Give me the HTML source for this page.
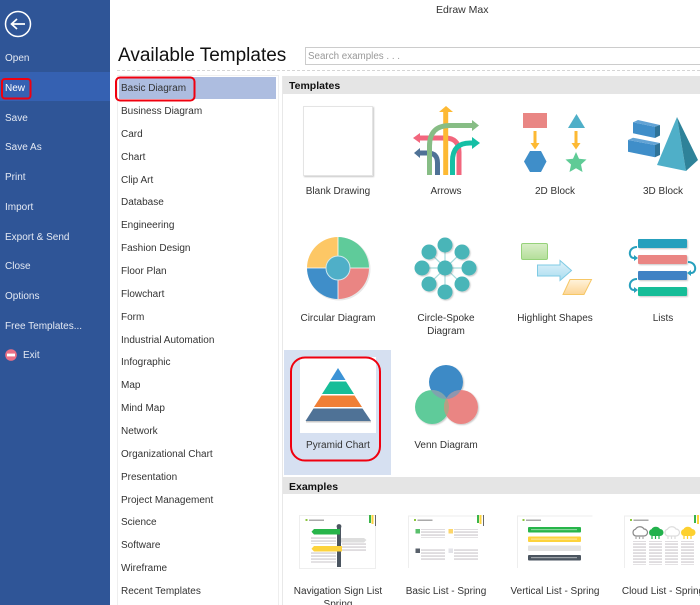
<!DOCTYPE html>
<html><head><meta charset="utf-8"><style>
html,body{margin:0;padding:0;background:#fff}
#p{position:relative;width:700px;height:605px;overflow:hidden;background:#fff;font-family:"Liberation Sans",sans-serif;font-size:10px;color:#333;filter:blur(.3px)}
#p>*{position:absolute}
.t{white-space:nowrap;line-height:12px;transform:translateY(-5px)}
.s{color:#e4e9f3;left:5px}
.l{left:121px;color:#333}
.c{text-align:center;width:110px;color:#333}
svg{left:0;top:0}
</style></head><body><div id="p">
<div style="left:0;top:0;width:110px;height:605px;background:#2f5597"></div>
<div style="left:0;top:72px;width:110px;height:29px;background:#3561b2"></div>
<div style="left:117px;top:75px;width:160px;height:530px;background:#fff;border-left:1px solid #eee;border-right:1px solid #eee;border-top:1px solid #eee"></div>
<div style="left:119px;top:77px;width:157px;height:22px;background:#adbde0"></div>
<div style="left:284px;top:350px;width:107px;height:125px;background:#d6e0f1"></div>
<div style="left:283px;top:76px;width:417px;height:18px;background:#e5e5e5"></div>
<div style="left:283px;top:477px;width:417px;height:17px;background:#e5e5e5"></div>
<div style="left:282px;top:76px;width:1px;height:529px;background:#e8e8e8"></div>
<div style="left:117px;top:70px;width:583px;border-top:1px dashed #d5d5d5"></div>
<div style="left:305px;top:47px;width:395px;height:18px;border:1px solid #ccc;box-sizing:border-box;border-right:0"></div>

<svg width="700" height="605" viewBox="0 0 700 605">
<defs>
<filter id="sh" x="-20%" y="-20%" width="140%" height="140%"><feDropShadow dx="1" dy="1" stdDeviation="0.8" flood-color="#000" flood-opacity=".22"/></filter>
<pattern id="tl" width="10" height="3" patternUnits="userSpaceOnUse"><rect width="10" height="1.1" y=".5" fill="#c9c4c9"/></pattern>
<linearGradient id="gg" x1="0" y1="0" x2="0" y2="1"><stop offset="0" stop-color="#d9eec8"/><stop offset="1" stop-color="#b4de9a"/></linearGradient>
<linearGradient id="gb" x1="0" y1="0" x2="0" y2="1"><stop offset="0" stop-color="#e0f2fa"/><stop offset="1" stop-color="#a9dcef"/></linearGradient>
<linearGradient id="go" x1="0" y1="0" x2="0" y2="1"><stop offset="0" stop-color="#fff3dc"/><stop offset="1" stop-color="#fcd596"/></linearGradient>
<clipPath id="cb"><circle cx="446" cy="382" r="17"/></clipPath>
<clipPath id="cg"><circle cx="432" cy="407" r="17"/></clipPath>
<clipPath id="cp"><circle cx="461" cy="407" r="17"/></clipPath>
<path id="cl" d="M3 11a3.500 3.500 0 0 1-.5-6.800A5 5 0 0 1 11 4a3.500 3.500 0 0 1 0 7Z"/>
</defs>
<!-- back -->
<circle cx="18" cy="24" r="12.500" fill="none" stroke="#fff" stroke-width="1.500"/>
<path d="M25 24H12M17 19l-5.500 5 5.500 5" fill="none" stroke="#fff" stroke-width="1.700"/>
<!-- exit -->
<circle cx="11" cy="355" r="5.800" fill="#ea6f86"/><rect x="7" y="353.600" width="8" height="2.800" fill="#fff"/>
<!-- blank -->
<rect x="303.500" y="106.500" width="69" height="69" fill="#fff" stroke="#e4e4e4" filter="url(#sh)"/>
<!-- arrows -->
<g fill="none" stroke-width="5">
<path d="M459 175V152Q459 138 445 138H419" stroke="#f2667d"/>
<path d="M437.500 175V163Q437.500 153 428 153H419" stroke="#4f7296"/>
<path d="M445.700 175V110" stroke="#fdb933"/>
<path d="M429.500 175V146Q429.500 125.500 450 125.500H473" stroke="#87bd85"/>
<path d="M452.500 175V161Q452.500 143 470 143H473" stroke="#15bfa5"/>
</g>
<path d="M446 106L453 112H439Z" fill="#fdb933"/><path d="M479 125.500L472 120V131Z" fill="#87bd85"/>
<path d="M413 138L420 133V143Z" fill="#f2667d"/><path d="M414 153L420 148V158Z" fill="#4f7296"/><path d="M480 143L472 137V149Z" fill="#15bfa5"/>
<!-- 2d -->
<rect x="523" y="113" width="24" height="15" fill="#e98684"/>
<path d="M576.500 114L585 128H568Z" fill="#4fafc8"/>
<path d="M533.500 131h3v12h3L535 149.500 530.500 143h3ZM574.500 131h3v12h3L576 149.500 571.500 143h3Z" fill="#fdb933"/>
<path d="M530 151h11l5.500 10.500L541 172h-11l-6-10.500Z" fill="#3f8ec9"/>
<path d="M576 152l3 6.700 7.500.8-5.500 5 1.500 7.500-6.500-3.800-6.500 3.800 1.500-7.500-5.500-5 7.500-.8Z" fill="#5fcb96"/>
<!-- 3d -->
<path d="M633 122.300L655 126.700V138L633 133.300Z" fill="#3f8ec9"/><path d="M633 122.300L638 120 660 125 655 126.700Z" fill="#62a3d5"/><path d="M655 126.700L660 125V135.500L655 138Z" fill="#2f7398"/>
<path d="M628 140L655 145V157.300L628 151.700Z" fill="#3f8ec9"/><path d="M628 140L633 137.700 660 143 655 145Z" fill="#62a3d5"/><path d="M655 145L660 143V155L655 157.300Z" fill="#2f7398"/>
<path d="M677 117L657 165 686 171Z" fill="#4fafc8"/><path d="M677 117L686 171 698 160Z" fill="#2e8299"/>
<!-- circular -->
<circle cx="339" cy="269" r="31.500" fill="#e8e8e8"/>
<path d="M338 268V237A31 31 0 0 0 307 268Z" fill="#fdc765"/>
<path d="M338 268V237A31 31 0 0 1 369 268Z" fill="#5fcb9a"/>
<path d="M338 268H369A31 31 0 0 1 338 299Z" fill="#ea8583"/>
<path d="M338 268H307A31 31 0 0 0 338 299Z" fill="#3f8ec9"/>
<path d="M338 237V299M307 268H369" stroke="#fff" stroke-width=".8"/>
<circle cx="338" cy="268" r="12" fill="#4fafc8" stroke="#cfe8ee" stroke-width="1"/>
<!-- spoke -->
<g stroke="#a5dadb" stroke-width="1.200"><path d="M445 245V292M422 268H469M429 252L462 284M462 252L429 284"/></g>
<g fill="#4ab5b8" filter="url(#sh)"><circle cx="445" cy="268" r="7.500"/><circle cx="445" cy="245" r="7.500"/><circle cx="445" cy="292" r="7.500"/><circle cx="422" cy="268" r="7.500"/><circle cx="469" cy="268" r="7.500"/><circle cx="429" cy="252" r="7.500"/><circle cx="462" cy="252" r="7.500"/><circle cx="429" cy="284" r="7.500"/><circle cx="462" cy="284" r="7.500"/></g>
<!-- highlight -->
<rect x="521.500" y="243.500" width="26" height="16" rx="1.500" fill="url(#gg)" stroke="#96d27a"/>
<path d="M537.500 265H560V260.500L571.500 270.500L560 280.500V276H537.500Z" fill="url(#gb)" stroke="#7fcbe4"/>
<path d="M570 279.500H591.500L584 294.500H563Z" fill="url(#go)" stroke="#f6c766"/>
<!-- lists -->
<g filter="url(#sh)"><rect x="638" y="239" width="49" height="9" rx="1" fill="#27a0bd"/><rect x="638" y="255" width="49" height="9" rx="1" fill="#ea8583"/><rect x="638" y="271" width="49" height="9" rx="1" fill="#3f82c4"/><rect x="638" y="287" width="49" height="9" rx="1" fill="#17bd98"/></g>
<g fill="none" stroke="#27a0bd" stroke-width="2"><path d="M637 247C628 247 628 258 634 258"/><path d="M688 262C697 262 697 273 691 273"/><path d="M637 279C628 279 628 290 634 290"/></g>
<g fill="#27a0bd"><path d="M638 258l-4-3v6ZM687 273l4-3v6ZM638 290l-4-3v6Z"/></g>
<!-- pyramid -->
<rect x="300" y="357" width="76" height="76" fill="#fff"/>
<path d="M338 368L345.500 380H330.500Z" fill="#3c93d6"/>
<path d="M330 381.500H346L354 394H322Z" fill="#17bd98"/>
<path d="M321.500 395.500H354.500L362 407H314Z" fill="#f07f36"/>
<path d="M313.500 408.500H362.500L371 421H305.500Z" fill="#4f7296"/>
<rect x="306" y="421" width="65" height="1.500" fill="#c9c9c9"/>
<rect x="291" y="357.500" width="89" height="103" rx="14" fill="none" stroke="#f0000f" stroke-width="2"/>
<!-- venn -->
<g filter="url(#sh)"><circle cx="446" cy="382" r="17" fill="#3c8ac6"/><circle cx="432" cy="407" r="17" fill="#5fcb9a"/><circle cx="461" cy="407" r="17" fill="#ea8583"/></g>
<g clip-path="url(#cb)"><circle cx="432" cy="407" r="17" fill="#7fa3ae"/><circle cx="461" cy="407" r="17" fill="#8f96ae"/></g>
<g clip-path="url(#cg)"><circle cx="461" cy="407" r="17" fill="#b3a184"/></g>
<!-- red boxes -->
<rect x="2" y="79" width="28.500" height="19.500" rx="3" fill="none" stroke="#f0000f" stroke-width="2"/>
<rect x="116" y="77.500" width="78.500" height="23" rx="4" fill="none" stroke="#f0000f" stroke-width="2"/>
<!-- thumbs -->
<g fill="none" stroke="#eee"><rect x="299.500" y="515.500" width="76" height="53" fill="#fff"/><path d="M408.500 568V516h75M517.500 568V516h75M624.500 568V516h75"/></g>
<g><rect x="305.500" y="519" width="2" height="2" fill="#8cc63f"/><rect x="309" y="519.500" width="15" height="1.500" fill="#aaa"/><rect x="414" y="519" width="2" height="2" fill="#8cc63f"/><rect x="417.500" y="519.500" width="15" height="1.500" fill="#aaa"/><rect x="522.500" y="519" width="2" height="2" fill="#8cc63f"/><rect x="526" y="519.500" width="15" height="1.500" fill="#aaa"/><rect x="630" y="519" width="2" height="2" fill="#8cc63f"/><rect x="633.500" y="519.500" width="15" height="1.500" fill="#aaa"/>
<rect x="369" y="515" width="2" height="8" fill="#3ab54a"/><rect x="371.500" y="515" width="2" height="9" fill="#fdd33d"/><rect x="375" y="515" width="1" height="11" fill="#666"/>
<rect x="477" y="515" width="2" height="8" fill="#3ab54a"/><rect x="479.500" y="515" width="2" height="9" fill="#fdd33d"/><rect x="483" y="515" width="1" height="11" fill="#666"/>
<rect x="694" y="515" width="2" height="8" fill="#3ab54a"/><rect x="697" y="515" width="2" height="9" fill="#fdd33d"/></g>
<!-- nav sign -->
<rect x="337" y="526" width="4" height="41" fill="#4b5560"/><circle cx="339" cy="526.500" r="2.400" fill="#4b5560"/>
<path d="M314 529H340V534.500H314L311.500 531.700Z" fill="#27b54a"/>
<path d="M341 538H364L366.500 540 364 542.500H341Z" fill="#dedede"/>
<path d="M314 546H342V551.500H314L311.500 548.700Z" fill="#fdd33d"/>
<rect x="311" y="536" width="25" height="8" fill="url(#tl)"/><rect x="311" y="552.500" width="25" height="10" fill="url(#tl)"/><rect x="342" y="543.500" width="24" height="9" fill="url(#tl)"/>
<!-- basic list -->
<rect x="415.500" y="529" width="4.500" height="4.500" fill="#5abf6c"/><rect x="448.500" y="529" width="4.500" height="4.500" fill="#fdd66a"/><rect x="415.500" y="548.500" width="4.500" height="4.500" fill="#59616b"/><rect x="448.500" y="548.500" width="4.500" height="4.500" fill="#e3e3e8"/>
<rect x="421" y="529" width="24" height="9" fill="url(#tl)"/><rect x="454" y="529" width="24" height="9" fill="url(#tl)"/><rect x="421" y="549" width="24" height="12" fill="url(#tl)"/><rect x="454" y="549" width="24" height="12" fill="url(#tl)"/>
<!-- vertical list -->
<rect x="528" y="527" width="53" height="5.500" rx="1" fill="#27b54a"/><rect x="528" y="536.500" width="53" height="5.500" rx="1" fill="#fdd33d"/><rect x="528" y="545.500" width="53" height="5.500" rx="1" fill="#e3e3e3"/><rect x="528" y="555" width="53" height="5.500" rx="1" fill="#4b5560"/>
<g fill="#fff" opacity=".45"><rect x="531" y="529" width="46" height="1.200"/><rect x="531" y="538.500" width="46" height="1.200"/><rect x="531" y="557" width="46" height="1.200"/></g>
<!-- cloud list -->
<use href="#cl" transform="translate(633,525)" fill="#fff" stroke="#888" stroke-width="1.200"/>
<use href="#cl" transform="translate(649,525)" fill="#22b14c"/>
<use href="#cl" transform="translate(665,525)" fill="#fff" stroke="#ddd" stroke-width="1.200"/>
<use href="#cl" transform="translate(681,525)" fill="#fdd02f"/>
<g stroke-width="1.200"><path d="M636 536v3M639.500 536v3M643 536v3" stroke="#aaa"/><path d="M652 536v3M655.500 536v3M659 536v3" stroke="#22b14c"/><path d="M668 536v3M671.500 536v3M675 536v3" stroke="#ddd"/><path d="M684 536v3M687.500 536v3M691 536v3" stroke="#fdd02f"/></g>
<rect x="633" y="541" width="13" height="24" fill="url(#tl)"/><rect x="649" y="541" width="13" height="24" fill="url(#tl)"/><rect x="665" y="541" width="13" height="24" fill="url(#tl)"/><rect x="681" y="541" width="13" height="24" fill="url(#tl)"/>
</svg>

<div class="t" style="left:436px;top:9px;color:#333;font-size:10.500px">Edraw Max</div>
<div class="t" style="left:118px;top:55px;font-size:19px;color:#111;line-height:22px;transform:translateY(-10px)">Available Templates</div>
<div class="t" style="left:308px;top:56px;color:#999;font-size:9.800px">Search examples . . .</div>
<div class="t" style="left:289px;top:85px;font-weight:bold;color:#111;font-size:10.500px">Templates</div>
<div class="t" style="left:289px;top:486px;font-weight:bold;color:#111;font-size:10.500px">Examples</div>

<div class="t s" style="top:58px">Open</div>
<div class="t s" style="top:88px;color:#fff">New</div>
<div class="t s" style="top:118px">Save</div>
<div class="t s" style="top:147px">Save As</div>
<div class="t s" style="top:177px">Print</div>
<div class="t s" style="top:207px">Import</div>
<div class="t s" style="top:237px">Export &amp; Send</div>
<div class="t s" style="top:266px">Close</div>
<div class="t s" style="top:296px">Options</div>
<div class="t s" style="top:326px">Free Templates...</div>
<div class="t s" style="top:355px;left:23px">Exit</div>

<div class="t l" style="top:88px">Basic Diagram</div>
<div class="t l" style="top:111px">Business Diagram</div>
<div class="t l" style="top:134px">Card</div>
<div class="t l" style="top:157px">Chart</div>
<div class="t l" style="top:180px">Clip Art</div>
<div class="t l" style="top:202px">Database</div>
<div class="t l" style="top:225px">Engineering</div>
<div class="t l" style="top:248px">Fashion Design</div>
<div class="t l" style="top:271px">Floor Plan</div>
<div class="t l" style="top:294px">Flowchart</div>
<div class="t l" style="top:317px">Form</div>
<div class="t l" style="top:340px">Industrial Automation</div>
<div class="t l" style="top:362px">Infographic</div>
<div class="t l" style="top:385px">Map</div>
<div class="t l" style="top:408px">Mind Map</div>
<div class="t l" style="top:431px">Network</div>
<div class="t l" style="top:454px">Organizational Chart</div>
<div class="t l" style="top:477px">Presentation</div>
<div class="t l" style="top:500px">Project Management</div>
<div class="t l" style="top:522px">Science</div>
<div class="t l" style="top:545px">Software</div>
<div class="t l" style="top:568px">Wireframe</div>
<div class="t l" style="top:591px">Recent Templates</div>

<div class="t c" style="left:283px;top:191px">Blank Drawing</div>
<div class="t c" style="left:391px;top:191px">Arrows</div>
<div class="t c" style="left:500px;top:191px">2D Block</div>
<div class="t c" style="left:608px;top:191px">3D Block</div>
<div class="t c" style="left:283px;top:318px">Circular Diagram</div>
<div class="t c" style="left:391px;top:318px">Circle-Spoke</div>
<div class="t c" style="left:391px;top:331px">Diagram</div>
<div class="t c" style="left:500px;top:318px">Highlight Shapes</div>
<div class="t c" style="left:608px;top:318px">Lists</div>
<div class="t c" style="left:283px;top:445px">Pyramid Chart</div>
<div class="t c" style="left:391px;top:445px">Venn Diagram</div>
<div class="t c" style="left:283px;top:591px">Navigation Sign List</div>
<div class="t c" style="left:283px;top:604px">Spring</div>
<div class="t c" style="left:391px;top:591px">Basic List - Spring</div>
<div class="t c" style="left:500px;top:591px">Vertical List - Spring</div>
<div class="t c" style="left:608px;top:591px">Cloud List - Spring</div>
</div></body></html>
